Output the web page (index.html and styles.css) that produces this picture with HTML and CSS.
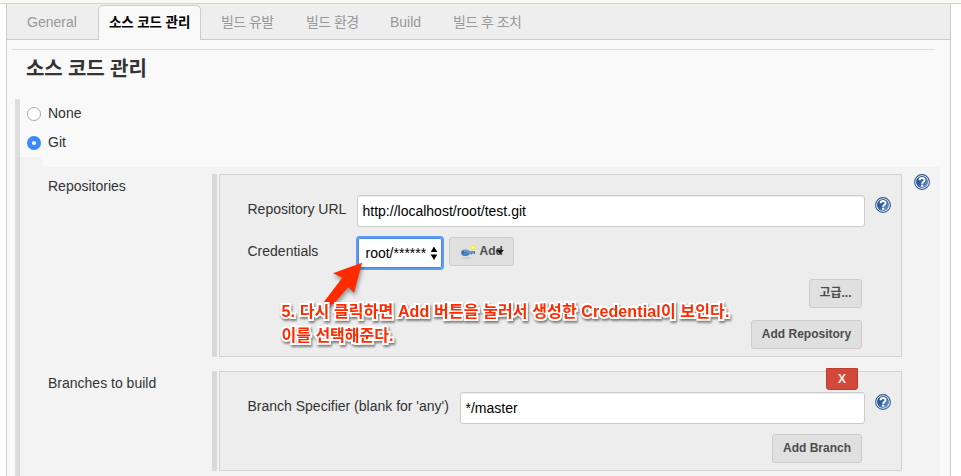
FILE: index.html
```
<!DOCTYPE html>
<html lang="ko">
<head>
<meta charset="utf-8">
<title>소스 코드 관리</title>
<link rel="stylesheet" href="styles.css">
</head>
<body>
<svg class="defs" width="0" height="0">
  <defs>
    <linearGradient id="blue" x1="0" y1="0" x2="1" y2="1"><stop offset="0" stop-color="#174482"/><stop offset=".45" stop-color="#315f9f"/><stop offset="1" stop-color="#7fa6d5"/></linearGradient>
    <symbol id="help" viewBox="0 0 16 16">
      <circle cx="8" cy="8" r="7.4" fill="#fff" stroke="#31588f" stroke-width="1.1"/>
      <circle cx="8" cy="8" r="6" fill="url(#blue)"/>
      <path d="M5.6 6.3C5.6 3.3 10.6 3.4 10.5 6.1C10.4 7.8 8.2 7.8 8.2 9.8" fill="none" stroke="#fff" stroke-width="2"/>
      <rect x="7.1" y="10.7" width="2.1" height="2" fill="#fff"/>
    </symbol>
  </defs>
</svg>
<div class="topbar"></div>
<main class="panel">
  <nav class="tabs">
    <a class="tab general">General</a>
    <a class="tab active">소스 코드 관리</a>
    <a class="tab trigger">빌드 유발</a>
    <a class="tab env">빌드 환경</a>
    <a class="tab build">Build</a>
    <a class="tab post">빌드 후 조치</a>
  </nav>
  <h1 class="title">소스 코드 관리</h1>
  <section class="scm">
    <label class="choice"><span class="radio"></span>None</label>
    <label class="choice"><span class="radio checked"></span>Git</label>
    <div class="notch"></div>
    <div class="settings">
      <div class="setting">
        <div class="name">Repositories</div>
        <div class="group repository">
          <div class="row">
            <span class="label url-label">Repository URL</span>
            <div class="input">http://localhost/root/test.git</div>
            <svg class="help"><use href="#help"/></svg>
          </div>
          <div class="row credentials">
            <span class="label cred-label">Credentials</span>
            <div class="select"><span>root/******</span><svg width="8" height="14" viewBox="0 0 8 14"><path d="M4 .5L7.3 6H.7ZM4 14L.7 8.5H7.3Z" fill="#000"/></svg></div>
            <div class="button add"><svg width="17" height="16" viewBox="0 0 17 16"><ellipse cx="7" cy="14" rx="5" ry=".8" fill="#c4c8cc"/><path d="M7 7H15V10H13.6V9H12.4V10.6H10.8V9.6H7Z" fill="#4779ad"/><ellipse cx="5.4" cy="8.8" rx="4.4" ry="3.3" fill="#4f83bc"/><path d="M3.6 6.9H8M8 7.9H14" stroke="#87add4"/><circle cx="3.2" cy="8.5" r="1" fill="#315f92"/><path d="M12.5 .6L13.6 2L15.6 1.6L15.1 3.4L16.2 4.8L14.4 5.2L13 6.6L11.9 5.2L9.8 4.7L11 3.3L10.3 1.8L12 2Z" fill="#f5eb43"/><circle cx="13" cy="3.7" r="1.2" fill="#fffdbb"/></svg><span>Add</span><i class="caret"></i></div>
          </div>
          <div class="button advanced">고급...</div>
          <div class="button add-repository">Add Repository</div>
        </div>
        <svg class="help outer"><use href="#help"/></svg>
      </div>
      <div class="setting branches">
        <div class="name">Branches to build</div>
        <div class="group branch">
          <div class="delete">X</div>
          <div class="row">
            <span class="label branch-label">Branch Specifier (blank for 'any')</span>
            <div class="input">*/master</div>
            <svg class="help"><use href="#help"/></svg>
          </div>
          <div class="button add-branch">Add Branch</div>
        </div>
      </div>
    </div>
  </section>
</main>
<svg class="arrow" width="50" height="60" viewBox="322 247 50 60"><path d="M322 304.5L342.3 277.7L333 273.3L362 262.7L354 292.7L348.3 287L333 304.5Z" fill="#ff2a00"/></svg>
<div class="note"><div class="line1">5. 다시 클릭하면 Add 버튼을 눌러서 생성한 Credential이 보인다.</div><div class="line2">이를 선택해준다.</div></div>
</body>
</html>
```
FILE: styles.css
```
* { box-sizing: border-box; }
body {
  margin: 0;
  height: 476px;
  overflow: hidden;
  background: #fff;
  color: #333;
  font: 14px/20px "Liberation Sans", "Noto Sans CJK KR", sans-serif;
}
.defs { display: block; }
.topbar { height: 4px; background: #f6faf2; border-bottom: 1px solid #d1d4ce; }
.panel {
  width: 945px;
  height: 480px;
  margin-left: 6px;
  background: #f9f9f9;
  border: solid #ccc;
  border-width: 0 1px;
}
.tabs { display: flex; height: 36px; background: #eee; border-bottom: 1px solid #ccc; }
.tab { color: #999; line-height: 37px; white-space: nowrap; }
.general { width: 91px; padding-left: 20px; }
.active {
  width: 103px;
  height: 35px;
  margin-top: 1px;
  padding-left: 10px;
  border: 1px solid #ccc;
  border-bottom: 0;
  border-radius: 5px 5px 0 0;
  background: #f9f9f9;
  color: #000;
  font-weight: bold;
  font-size: 13.5px;
  letter-spacing: -.1px;
  line-height: 33px;
}
.trigger { width: 105px; padding-left: 20px; }
.env { width: 84px; }
.build { width: 63px; }
.trigger, .env, .post { letter-spacing: -.55px; }
.title {
  width: 923px;
  height: 50px;
  margin: 9px 0 0 5px;
  padding: 6px 0 0 14px;
  border-top: 1px solid #ddd;
  font-size: 20px;
  letter-spacing: -.1px;
  line-height: 26px;
}
.scm { margin-left: 8px; border-left: 5px solid #dfdfdf; height: 377px; }
.choice { display: flex; align-items: center; height: 29px; padding: 0 0 2px 7px; }
.radio { width: 14px; height: 14px; margin-right: 7px; border: 1px solid #aaa; border-radius: 50%; background: #fff; position: relative; top: 1px; }
.checked { border: 5px solid #3b89fc; }
.notch { width: 26px; height: 10px; margin-left: -3px; border-left: 3px solid #d9d9d9; background: #f3f3f3; }
.settings { width: 923px; height: 309px; margin-left: -3px; padding-top: 7px; border-left: 3px solid #d9d9d9; background: #f3f3f3; }
.setting { display: flex; align-items: flex-start; }
.name { width: 192px; padding: 2px 0 0 28px; }
.group {
  width: 683px;
  margin-left: 7px;
  border: 1px solid #d3d3d3;
  background: #ededed;
  padding: 20px 10px 0 23px;
  position: relative;
  display: flow-root;
}
.group::before { content: ""; position: absolute; left: -8px; top: -1px; bottom: -1px; width: 5px; background: #d9d9d9; }
.repository { height: 183px; }
.branches { margin-top: 14px; }
.branch { height: 100px; padding-top: 20px; }
.row { display: flex; align-items: flex-start; padding-left: 4.5px; }
.label { flex: none; height: 30px; padding-top: 4px; white-space: nowrap; }
.url-label, .cred-label { width: 109.5px; }
.branch-label { width: 212.5px; }
.input { flex: 1; height: 32px; border: 1px solid #ccc; border-radius: 3px; background: #fff; color: #000; padding: 6px 4.5px; line-height: 19px; box-shadow: inset 0 1px 1px #eee; }
.help { width: 16px; height: 16px; margin: 2px 0 0 10px; }
.outer { margin: 0 0 0 12px; }
.credentials { margin-top: 10px; }
.select { width: 84px; height: 30px; margin: 1px 0 0 1px; border: 1px solid #4b88e8; border-radius: 2px; outline: 2px solid #5c9af3; background: #fff; color: #000; display: flex; align-items: center; justify-content: space-between; padding: 0 3px 1px 6.5px; }
.button { height: 29px; border: 1px solid #ccc; border-radius: 3px; background: #e0e0e0; color: #4d4d4d; font-weight: bold; font-size: 12px; line-height: 27px; text-align: center; }
.add { width: 65px; margin-left: 7px; padding-left: 10px; display: flex; align-items: center; }
.add span { margin-left: 2.5px; }
.caret { width: 0; height: 0; margin-left: -7px; border: 4px solid transparent; border-top-color: #111; border-bottom: 0; }
.advanced { width: 53px; margin: 11px 29px 0 auto; }
.add-repository { width: 111px; margin: 12px 29px 0 auto; }
.add-branch { width: 90px; margin: 10px 29px 0 auto; }
.delete { position: absolute; left: 606px; top: -4px; width: 32px; height: 22px; border: 1px solid #bd3b30; border-radius: 0 0 3px 3px; background: #d24939; color: #eee; font-size: 12px; font-weight: bold; line-height: 21px; text-align: center; }
.arrow { position: absolute; left: 322px; top: 247px; filter: drop-shadow(1px 3px 2px #0006); }
.note {
  position: absolute;
  left: 281.5px;
  top: 300px;
  color: #ff2a00;
  font-weight: bold;
  font-size: 16px;
  line-height: 24px;
  white-space: nowrap;
  -webkit-text-stroke: 4px #fff;
  paint-order: stroke fill;
  filter: drop-shadow(1px 2px 1px #0007);
}
.line1 { letter-spacing: .13px; }
```
